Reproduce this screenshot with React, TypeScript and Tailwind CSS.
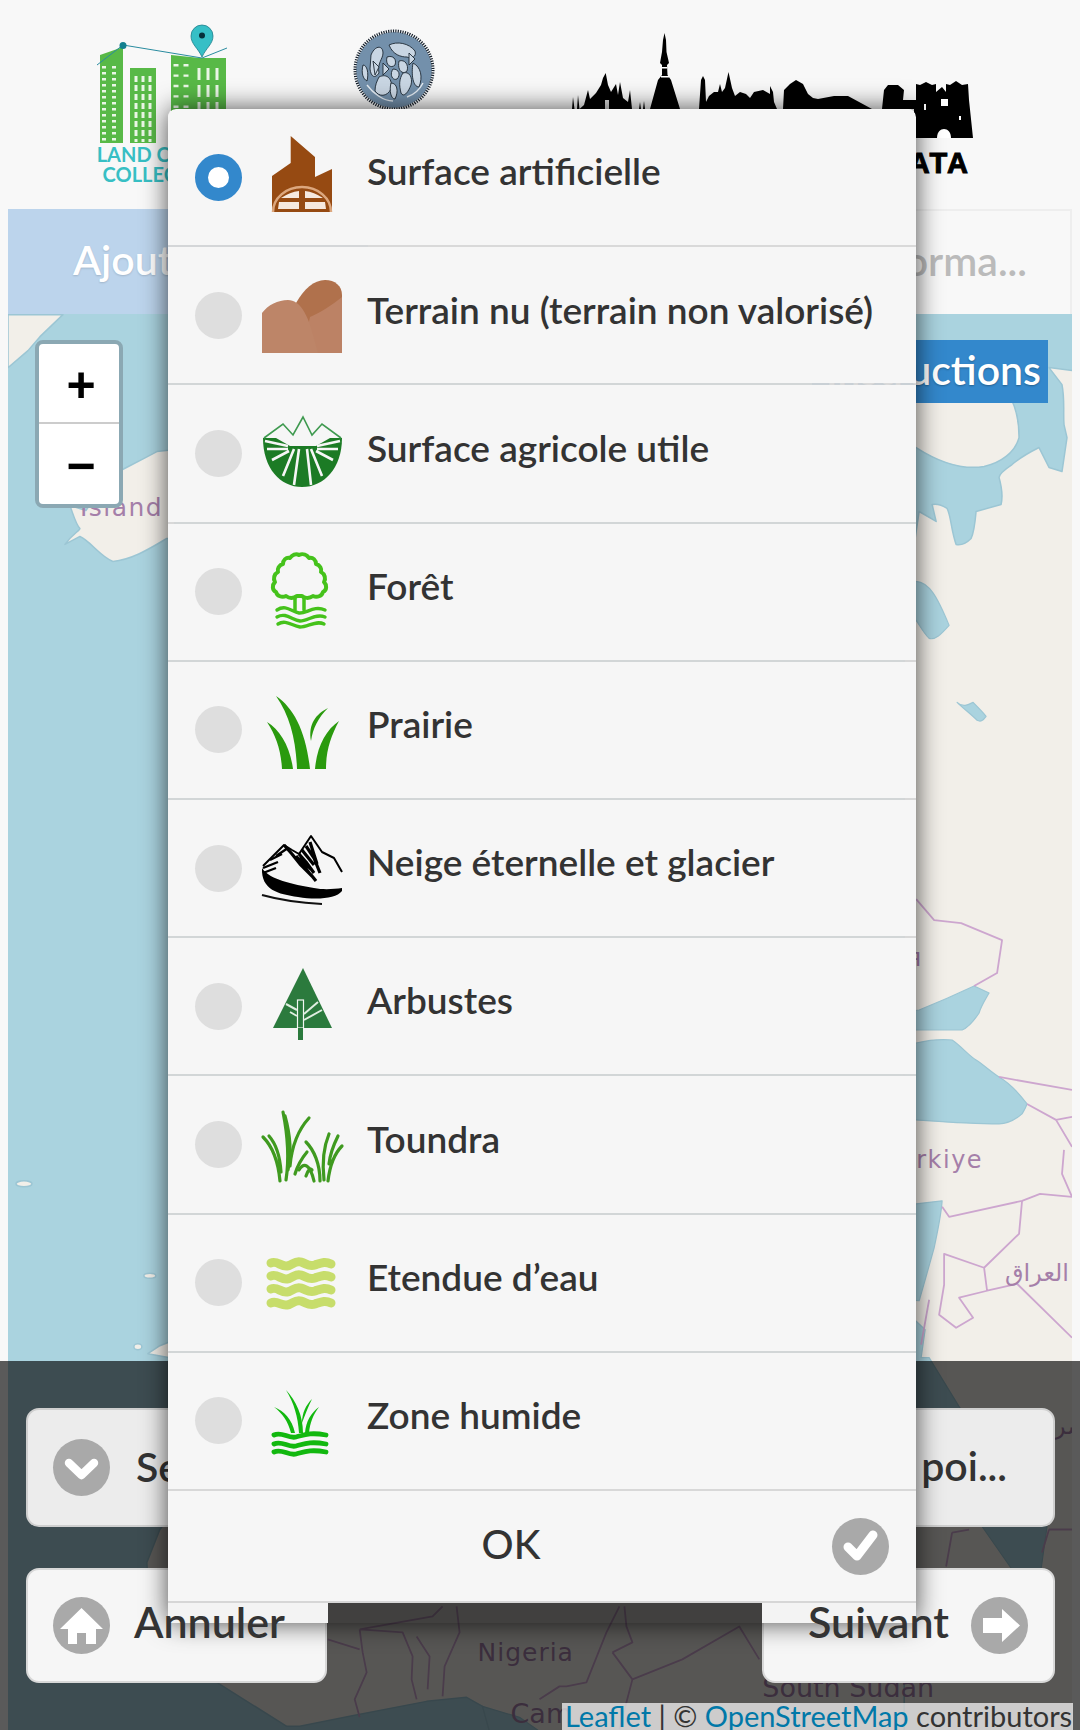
import React from "react";

const FONT = 'font-["Lato","Noto_Sans",sans-serif]';

const IconFrame = ({ children }: { children: React.ReactNode }) => (
  <svg viewBox="0 0 80 80" className="w-20 h-20 shrink-0 overflow-visible">{children}</svg>
);

const Factory = () => (
  <IconFrame>
    <path d="M28.7 -1 L53 20 L53 40 L70 32 L70 75 L10 75 L10 39 L28.7 26 Z" fill="#964a12" />
    <path d="M11 75 A29 25 0 0 1 69 75" fill="none" stroke="#dca77e" strokeWidth="2.5" />
    <path d="M19 61 Q28 55 37 54 L37 61 Z M43 54 Q52 55 61 61 L43 61 Z M16 72 L17 65 L37 65 L37 72 Z M43 65 L63 65 L64 72 L43 72 Z" fill="#f6e9df" />
  </IconFrame>
);

const Bare = () => (
  <IconFrame>
    <path d="M34 28 C42 14 52 5 63 5 C73 5 80 11 80 20 L80 78 L30 78 Z" fill="#b0714c" />
    <path d="M48 42 C58 38 70 30 80 22 L80 78 L40 78 Z" fill="#bc8265" />
    <path d="M0 38 C6 30 16 25 26 25 C38 25 46 40 51 60 L56 78 L0 78 Z" fill="#bd8568" />
  </IconFrame>
);

const Farm = () => (
  <IconFrame>
    <path d="M1 25 H80 C80 55 62 74 40 74 C18 74 1 55 1 25 Z" fill="#1c7b25" />
    <path d="M2 25 L21 11 L31 22 L41 4 L50 22 L60 11 L79 25" fill="none" stroke="#3f9a50" strokeWidth="1.6" />
    <path d="M14 25 L21 14 L31 25 L41 8 L50 25 L60 14 L68 25 L54 33 L28 33 Z" fill="#f6f6f6" />
    <g stroke="#f6f6f6" strokeWidth="2.6" fill="none">
      <path d="M26 33 L3 28 M26 36 L5 36 M27 38 L10 47 M32 36 L21 63 M37 36 L32 72 M45 36 L49 72 M49 36 L60 63 M54 38 L71 47 M55 36 L76 36 M55 33 L78 28" />
    </g>
  </IconFrame>
);

const Tree = () => (
  <IconFrame>
    <g fill="none" stroke="#45c21b" strokeLinecap="round" strokeLinejoin="round">
      <path
        d="M37 3 C41 1 45 3 47 6 C51 5 54 8 54 12 C58 13 60 17 59 20 C63 22 64 27 62 30 C65 33 65 38 61 40 C60 44 55 46 51 44 C47 47 42 46 40 44 L35 44 C32 46 28 47 24 44 C20 46 15 44 14 40 C10 38 10 33 13 30 C11 27 12 22 16 20 C15 17 17 13 21 12 C21 8 24 5 28 6 C30 3 34 1 37 3 Z"
        strokeWidth="4"
      />
      <path d="M33 46 L33 58 M42 46 L42 58" strokeWidth="3.5" />
      <path d="M15 58 C24 52 30 60 37 61 C44 62 52 53 63 58 M15 65 C24 60 30 68 38 69 C46 69 54 61 63 65 M16 72 C24 67 30 74 38 75 C46 75 54 68 62 72" strokeWidth="3.4" />
    </g>
  </IconFrame>
);

const Grass = () => (
  <IconFrame>
    <g fill="#2a9a0e">
      <path d="M14 6 C32 18 44 42 48 79 L35 79 C34 50 28 26 14 6 Z" />
      <path d="M5 32 C18 40 28 56 31 79 L20 79 C19 60 14 46 5 32 Z" />
      <path d="M77 31 C64 40 55 56 53 79 L64 79 C64 60 69 46 77 31 Z" />
      <path d="M66 18 C54 24 46 34 49 51 C51 38 56 28 66 18 Z" />
    </g>
  </IconFrame>
);

const Snow = () => (
  <IconFrame>
    <path d="M0 40 C8 52 30 56 52 60 C62 62 72 61 80 60 L80 63 C74 71 54 72 36 69 C16 66 -1 62 0 40 Z" fill="#000" />
    <path d="M0 67 C18 72 40 75 60 76" fill="none" stroke="#111" strokeWidth="2.2" />
    <g fill="none" stroke="#000" strokeLinejoin="round">
      <path d="M1 38 L12 27 L22 17 L30 22 L37 26 L49 8 L60 24 L72 30 L80 44" strokeWidth="2" />
      <path d="M22 17 L30 26 L38 36 L50 48 L54 53 M37 26 L44 34 L52 45 M44 18 L52 30 L58 45 M40 22 L52 37 M37 30 L50 42 M34 28 L48 46 M48 14 L55 36" strokeWidth="3.2" />
      <path d="M1 40 L16 34 M1 45 L14 40 M8 32 L20 26 M14 28 L26 20" strokeWidth="2.4" />
    </g>
  </IconFrame>
);

const Shrub = () => (
  <IconFrame>
    <path d="M41 2 L70 62 L11 62 Z" fill="#2b7a3d" />
    <rect x="35.5" y="34" width="6" height="28" fill="#2b7a3d" stroke="#f2f6f2" strokeWidth="1.2" />
    <rect x="36" y="62" width="5" height="12" fill="#2b7a3d" />
    <path d="M42 48 L56 36 M42 54 L60 44 M35 44 L24 38 M35 50 L28 46" stroke="#dfeee0" strokeWidth="2" fill="none" />
  </IconFrame>
);

const Tundra = () => (
  <IconFrame>
    <g fill="none" stroke="#3f9a1f" strokeWidth="3.2" strokeLinecap="round">
      <path d="M18 77 C16 55 10 42 1 33 M7 32 C14 40 18 52 19 68" />
      <path d="M24 76 C28 50 25 28 21 8 M23 12 C28 30 30 48 26 66" />
      <path d="M28 62 C30 40 36 26 47 14" />
      <path d="M33 70 C36 60 40 54 45 48" />
      <path d="M37 66 C42 58 48 60 52 77 M44 72 C46 66 48 64 50 66" />
      <path d="M58 77 C58 60 52 46 44 38 M62 76 C60 58 62 42 67 30" />
      <path d="M66 77 C68 60 74 48 80 42 M67 60 C68 50 72 40 76 32" />
    </g>
  </IconFrame>
);

const Water = () => (
  <IconFrame>
    <g fill="none" stroke="#c7dd6b" strokeWidth="9" strokeLinecap="round">
      <path d="M9 20 C15 17 19 24 25 23 C31 22 33 17 39 19 C45 21 47 24 53 22 C59 20 63 18 69 21" />
      <path d="M9 33 C15 30 19 37 25 36 C31 35 33 30 39 32 C45 34 47 37 53 35 C59 33 63 31 69 34" />
      <path d="M9 46 C15 43 19 50 25 49 C31 48 33 43 39 45 C45 47 47 50 53 48 C59 46 63 44 69 47" />
      <path d="M9 60 C15 57 19 63 25 62 C31 61 33 56 39 58 C45 60 47 63 53 61 C59 59 63 57 69 60" />
    </g>
  </IconFrame>
);

const Wetland = () => (
  <IconFrame>
    <g fill="#12b80f">
      <path d="M24 9 C34 20 41 34 41 52 L37 52 C36 36 32 22 24 9 Z" />
      <path d="M12 26 C20 32 26 40 29 52 L33 52 C30 38 22 30 12 26 Z" />
      <path d="M50 18 C44 24 40 32 40 42 C43 34 46 26 50 18 Z" />
      <path d="M57 26 C49 32 44 40 43 52 L47 52 C48 42 51 34 57 26 Z" />
    </g>
    <g fill="none" stroke="#12b80f" strokeWidth="4.8" strokeLinecap="round">
      <path d="M12 54 C20 50 26 58 34 56 C42 54 48 51 64 54" />
      <path d="M12 63 C20 59 26 67 34 65 C42 63 48 60 64 63" />
      <path d="M12 71 C20 67 26 75 34 73 C42 71 48 68 64 71" />
    </g>
  </IconFrame>
);

const rows: { label: string; icon: React.ReactNode; checked?: boolean }[] = [
  { label: "Surface artificielle", icon: <Factory />, checked: true },
  { label: "Terrain nu (terrain non valorisé)", icon: <Bare /> },
  { label: "Surface agricole utile", icon: <Farm /> },
  { label: "Forêt", icon: <Tree /> },
  { label: "Prairie", icon: <Grass /> },
  { label: "Neige éternelle et glacier", icon: <Snow /> },
  { label: "Arbustes", icon: <Shrub /> },
  { label: "Toundra", icon: <Tundra /> },
  { label: "Etendue d’eau", icon: <Water /> },
  { label: "Zone humide", icon: <Wetland /> },
];

const CircleIcon = ({ children }: { children: React.ReactNode }) => (
  <span className="w-[57px] h-[57px] shrink-0 rounded-full bg-[#a9a9a9] flex items-center justify-center">
    <svg viewBox="0 0 57 57" className="w-[57px] h-[57px]">{children}</svg>
  </span>
);

const Chevron = () => (
  <CircleIcon>
    <path d="M16 24 L28.5 36 L41 24" fill="none" stroke="#fff" strokeWidth="8.5" strokeLinecap="round" strokeLinejoin="round" />
  </CircleIcon>
);
const Home = () => (
  <CircleIcon>
    <path d="M28.5 11 L50 32 L43 32 L43 47 L33 47 L33 36 L24 36 L24 47 L15 47 L15 32 L7 32 Z" fill="#fff" />
  </CircleIcon>
);
const ArrowR = () => (
  <CircleIcon>
    <path d="M31 12 L49 28.5 L31 45 L31 36 L12 36 L12 21 L31 21 Z" fill="#fff" />
  </CircleIcon>
);
const Check = () => (
  <CircleIcon>
    <path d="M16 29 L25 38 L41 17" fill="none" stroke="#fff" strokeWidth="9" strokeLinejoin="round" strokeLinecap="round" />
  </CircleIcon>
);

const BuildingsLogo = () => (
  <svg viewBox="92 20 145 125" className="w-[145px] h-[125px] block">
    <path d="M100 55 L123 47 L123 143 L100 143 Z" fill="#58b947" />
    <rect x="130" y="68" width="26" height="75" fill="#58b947" />
    <path d="M171 55 L200 58 L226 58 L226 143 L171 143 Z" fill="#58b947" />
    <g stroke="#eaf6e6" strokeWidth="2.2" strokeDasharray="7 3.5">
      <path d="M104 66 V142 M114 66 V142" strokeWidth="4" strokeDasharray="2.4 3.6" />
      <path d="M136 76 V142 M143 76 V142 M150 76 V142" strokeWidth="3" strokeDasharray="6 3" />
      <path d="M176 64 V142 M186 64 V142" strokeWidth="5" strokeDasharray="2.4 8" />
      <path d="M199 68 V142 M208 68 V142 M217 68 V142" strokeWidth="3" strokeDasharray="12 5" />
    </g>
    <path d="M97 65 L123 45 L202 58 L227 48" fill="none" stroke="#2a8ca0" strokeWidth="1" />
    <circle cx="123" cy="45.5" r="3.5" fill="#12808f" />
    <path d="M202 57 C198 48 191 44 191 36 A11 11 0 0 1 213 36 C213 44 206 48 202 57 Z" fill="#36bfc6" stroke="#1f7f8c" strokeWidth="0.8" />
    <circle cx="202" cy="35.5" r="3" fill="#06303a" />
  </svg>
);

const SealLogo = () => (
  <svg viewBox="0 0 82 82" className="w-[82px] h-[82px] block">
    <circle cx="41" cy="41" r="38" fill="#7390ab" />
    <circle cx="41" cy="41" r="39" fill="none" stroke="#16202c" strokeWidth="3" strokeDasharray="1.2 1.2" />
    <g fill="#c9d6e3" stroke="#1c2833" strokeWidth="0.9">
      <path d="M18 26 C22 16 30 16 30 24 C30 30 24 34 26 44 C22 50 18 48 17 40 Z" />
      <path d="M36 16 C44 12 56 14 62 22 C64 28 58 30 54 28 C48 28 40 26 36 16 Z" />
      <path d="M34 28 C40 26 44 30 42 36 C38 40 32 36 34 28 Z" />
      <path d="M46 32 C52 30 56 36 54 42 C50 46 44 42 46 32 Z" />
      <path d="M40 40 C46 40 48 46 44 50 C40 52 36 46 40 40 Z" />
      <path d="M50 44 C56 42 60 48 58 56 C54 66 50 68 48 64 C46 56 46 50 50 44 Z" />
      <path d="M26 48 C34 44 40 50 38 60 C34 68 26 68 22 62 C22 56 24 52 26 48 Z" />
      <path d="M60 34 C68 38 70 48 66 58 C60 58 58 46 60 34 Z" />
      <path d="M10 36 C14 36 16 44 14 52 C10 50 8 44 10 36 Z" />
      <path d="M38 54 C44 54 46 62 42 70 C38 70 36 62 38 54 Z" />
      <path d="M20 32 L26 38 L22 46 Z M30 34 L36 40 L30 46 Z M56 24 L62 30 L56 36 Z" />
    </g>
    <path d="M14 56 C20 64 30 72 40 72 M54 68 C60 66 66 62 70 54" fill="none" stroke="#e4ebf2" strokeWidth="1.4" />
  </svg>
);

const Skyline = () => (
  <svg viewBox="570 30 410 110" className="w-[410px] h-[110px] block">
    <g fill="#000">
      <path d="M574 109 L575 97 L576.5 109 L579 109 L580 95 L581.5 109 L586 105 L590 90 L592 99 L598 93 L603 85 L605 78 L607.7 73 L610 85 L613 92 L618 84 L620 95 L622 82 L625 98 L630 102 L632 90 L634 109 Z" />
      <path d="M641 109 L642 102 L643 109 Z M645 109 L646 101 L647 109 Z" />
      <path d="M652 109 L660 80 L664 75 L664 65 L662 63 L664 52 L665 40 L666.5 33 L668 40 L668.5 52 L671 63 L669 65 L669.5 75 L673 80 L682 109 Z" />
      <path d="M701 109 L703 80 L705 76 L707 80 L708 102 L711 96 L716 92 L720 92 L722 84 L724 92 L727 88 L730.5 72 L734 88 L737 96 L742 92 L748 94 L752 98 L756 92 L765 90 L772 94 L772 86 L775 92 L776 102 L779 109 Z" />
      <path d="M785 109 L786 90 L792 84 L798 80 L805 84 L810 94 L815 98 L820 99 L836 96 L850 96 L874 109 Z" />
      <path d="M884 109 L886 90 L890 85 L900 85 L906 90 L905 100 L918 100 L918 84 L922 85 L928 82 L934 85 L938 84 L938 92 L944 87 L948 92 L948 84 L952 85 L958 81 L964 85 L970 84 L971 100 L975 138 L916 138 L916 109 Z" />
    </g>
    <rect x="607" y="100" width="4" height="9" fill="#ddd" />
    <rect x="664" y="67" width="5" height="1.5" fill="#fff" />
    <rect x="663" y="76" width="8" height="1.5" fill="#fff" />
    <path d="M939 138 C939 126 953 126 953 138 Z" fill="#fff" />
    <rect x="943" y="99" width="7" height="7" fill="#fff" />
    <rect x="926" y="104" width="2" height="6" fill="#fff" />
    <rect x="961" y="116" width="2" height="4" fill="#fff" />
  </svg>
);

const MapSvg = () => (
  <svg viewBox="8 314 1065 1416" className="absolute inset-0 w-full h-full">
    <g fill="#f2efe9" stroke="#9cc6d4" strokeWidth="1.5" strokeLinejoin="round">
      <path d="M8 367 L28 350 L40 336 L63 314 L8 314 Z" />
      <path d="M65 544 C72 534 80 530 80 528 C76 524 74 516 70 505 L86 510 L110 476 C120 470 127 467 157 451 L175 449 L175 538 L167 538 C150 548 133 559 113 561 C100 556 90 540 80 536 Z" />
      <ellipse cx="24" cy="1184" rx="8" ry="3" />
      <ellipse cx="150" cy="1276" rx="6" ry="2.5" />
      <ellipse cx="138" cy="1347" rx="4" ry="3" />
      <path d="M148 1354 L160 1346 L170 1342 L170 1358 Z" />
      <path d="M905 400 L1012 398 C1018 410 1020 424 1020 437 C1016 452 1002 462 985 466 C960 470 934 458 917 447 L905 440 Z" />
      <path d="M1074 370 L1050 367 L1063 384 C1066 400 1064 412 1065 424 L1068 437 L1063 471 L1050 467 L1040 447 C1030 452 1020 458 1013 464 C1004 470 1000 474 1000 477 C1003 488 1004 496 1002 504 L977 511 C976 522 975 532 972 538 C966 544 962 545 957 544 C952 530 952 516 948 508 C942 504 938 503 933 504 L937 521 L920 511 L916 538 L905 540 L905 1760 L1074 1760 Z" />
      <path d="M168 1361 L168 1520 L160 1530 L147 1563 L150 1620 L217 1683 L287 1727 L300 1727 L350 1717 L427 1702 L467 1698 L483 1707 L490 1732 L905 1732 L905 1361 Z" />
    </g>
    <g fill="#aad3df" stroke="#9cc6d4" strokeWidth="1.2" strokeLinejoin="round">
      <path d="M905 578 L917 581 C930 582 938 596 950 625 C942 634 936 640 930 638 C924 632 920 624 917 620 L905 612 Z" />
      <path d="M958 702 C964 708 970 704 974 702 C980 708 984 712 987 716 C984 720 982 722 978 720 C972 714 964 708 958 702 Z" />
      <path d="M905 1012 L920 1010 C940 1002 958 994 975 986 L990 993 C986 1000 982 1006 980 1013 C974 1022 968 1028 963 1030 L917 1030 L905 1030 Z" />
      <path d="M905 1044 L917 1043 C930 1040 942 1039 953 1040 C962 1046 970 1056 977 1060 C986 1066 992 1072 1000 1077 C1012 1084 1022 1096 1028 1104 C1026 1110 1024 1112 1023 1114 C1016 1120 1008 1124 1000 1124 C970 1124 945 1122 917 1120 L905 1120 Z" />
      <path d="M905 1204 L917 1204 L943 1201 C942 1216 938 1234 935 1248 C930 1266 925 1284 920 1301 L905 1300 Z" />
      <path d="M905 1310 L926 1330 L922 1358 L930 1358 L960 1407 L1048 1527 L1042 1570 L1040 1600 L1030 1600 L1013 1570 L983 1527 L917 1425 L905 1400 Z" />
      <path d="M490 1732 L483 1707 L520 1718 L540 1732 Z" />
    </g>
    <g fill="none" stroke="#cda6cf" strokeWidth="1.8" strokeLinejoin="round">
      <path d="M917 899 L935 920 L962 923 L1003 940 L998 973 L975 986" />
      <path d="M1000 1077 L1073 1090" />
      <path d="M1028 1104 L1057 1120 L1073 1117 M1057 1120 L1073 1147 M1065 1150 L1063 1174 L1073 1197" />
      <path d="M943 1207 L950 1217 L1023 1201 L1041 1194 L1073 1197" />
      <path d="M1023 1201 L1020 1234 L985 1268 L988 1291 L960 1298 L974 1318 L957 1328 L940 1315 L945 1285 L945 1254 L985 1268 M988 1291 L1018 1284 L1073 1338" />
      <path d="M930 1300 L922 1345" />
      <path d="M953 1533 L970 1530 M953 1533 L947 1567 M1050 1530 L1073 1530 M1050 1530 L1043 1553" />
      <path d="M360 1630 L363 1653 L367 1673 L355 1700 L360 1718 M360 1630 L403 1633 L413 1657 L412 1680 L417 1700 M417 1637 L430 1657 L428 1690 M443 1697 L445 1667 L460 1633 L457 1607 M328 1640 L360 1650 M443 1607 L433 1617 L360 1630" />
      <path d="M540 1700 L560 1687 L567 1687 L587 1683 L607 1633 L620 1607 M613 1653 L633 1643 L627 1627 L625 1607 M613 1653 L633 1680 L683 1660 L740 1627 L760 1660 M633 1680 L620 1730" />
    </g>
    <g fill="#a57fa9" fontFamily="DejaVu Sans, sans-serif">
      <text x="80" y="516" fontSize="25" letterSpacing="1.5">Ísland</text>
      <text x="984" y="1168" fontSize="24" letterSpacing="1.5" textAnchor="end">Türkiye</text>
      <text x="922" y="966" fontSize="24" textAnchor="end">Россия</text>
      <text x="1070" y="1281" fontSize="24" textAnchor="end">العراق</text>
      <text x="478" y="1662" fontSize="25" letterSpacing="1">Nigeria</text>
      <text x="511" y="1724" fontSize="27">Cam</text>
      <text x="763" y="1698" fontSize="27">South Sudan</text>
      <text x="1055" y="1434" fontSize="24">مصر</text>
    </g>
  </svg>
);

export default function App() {
  return (
    <div className={`relative w-[1080px] h-[1730px] overflow-hidden bg-[#f8f8f8] flex flex-col text-[#333] ${FONT}`}>
      <header className="h-[209px] shrink-0 flex items-start relative">
        <div className="ml-[92px] mt-[20px] w-[145px]">
          <BuildingsLogo />
          <div className="text-center text-[#37bfc4] text-[20px] leading-[20px] font-bold -mt-[1px] w-[136px] whitespace-nowrap">
            <div>LAND COVER</div>
            <div>COLLECTOR</div>
          </div>
        </div>
        <div className="ml-[116px] mt-[29px]">
          <SealLogo />
        </div>
        <div className="ml-[133px] mt-[30px] flex flex-col items-end">
          <Skyline />
          <div className="mr-[8px] mt-[8px] text-[#000] text-[29px] leading-[30px] font-bold tracking-[2px] font-['Liberation_Sans',sans-serif] [-webkit-text-stroke:1px_#000]">DATA</div>
        </div>
      </header>

      <nav className="mx-2 h-[105px] shrink-0 flex justify-between items-center text-[41px] font-semibold">
        <div className="w-[360px] h-full bg-[#bcd4ec] text-white pl-[65px] flex items-center pb-[4px] [text-shadow:0_1px_2px_rgba(0,0,0,0.15)]">Ajouter</div>
        <div className="w-[360px] h-full border-t-2 border-r-2 border-[#eeeeee] text-[#bbbbbb] flex items-center justify-end pr-[43px] pb-[4px]">Informa...</div>
      </nav>

      <main className="relative mx-2 flex-1 bg-[#aad3df]">
        <MapSvg />
        <div className="absolute left-[27px] top-[26px] w-[88px] rounded-[8px] border-4 border-[#8ba8b3] bg-white flex flex-col">
          <div className="h-[80px] border-b-2 border-[#cccccc] flex items-center justify-center pl-[4px] pt-[4px] font-['Liberation_Sans',sans-serif] font-bold text-[50px] leading-none text-black">+</div>
          <div className="h-[80px] flex items-center justify-center pl-[4px] pt-[4px] font-['Liberation_Sans',sans-serif] font-bold text-[50px] leading-none text-black">−</div>
        </div>
        <div className="absolute right-[24px] top-[26px] w-[236px] h-[63px] bg-[#3388cc] text-white text-[41px] font-semibold flex items-center justify-end pr-[7px] pb-[4px] [text-shadow:0_1px_2px_rgba(0,0,0,0.3)]">Instructions</div>
      </main>

      <footer className="absolute left-0 right-0 bottom-0 h-[369px] bg-[rgba(0,0,0,0.64)] pl-[26px] pr-[25px] pt-[47px] flex flex-col gap-[41px] text-[41px] font-semibold">
        <div className="h-[119px] rounded-[13px] border-2 border-[#cfcfcf] bg-[#ececec] flex items-center justify-between pl-[25px] pr-[46px]">
          <span className="flex items-center gap-[26px]"><Chevron /><span className="pb-[2px]">Se déplacer</span></span>
          <span className="pb-[4px]">au poi...</span>
        </div>
        <div className="h-[115px] flex justify-between text-[43px]">
          <div className="w-[301px] rounded-[13px] border-2 border-[#d8d8d8] bg-[#f6f6f6] flex items-center gap-[24px] pl-[25px]">
            <Home /><span className="relative z-20 pb-[6px]">Annuler</span>
          </div>
          <div className="w-[293px] rounded-[13px] border-2 border-[#d8d8d8] bg-[#f6f6f6] flex items-center justify-end gap-[22px] pr-[25px]">
            <span className="relative z-20 pb-[6px]">Suivant</span><ArrowR />
          </div>
        </div>
      </footer>

      <div className="absolute right-[7px] bottom-0 w-[511px] h-[27px] bg-[rgba(255,255,255,0.7)] pl-[3px] text-[29px] leading-[26px] text-[#333] whitespace-nowrap overflow-hidden">
        <span className="text-[#0078a8]">Leaflet</span> | © <span className="text-[#0078a8]">OpenStreetMap</span> contributors
      </div>

      <div className="absolute z-10 left-[168px] top-[109px] w-[748px] rounded-[8px] shadow-[0_0_26px_rgba(0,0,0,0.7)] text-[37px] font-semibold">
        {rows.map((r) => (
          <div
            key={r.label}
            className="h-[138.2px] flex items-center bg-[#f6f6f6] bg-clip-padding border-b-2 border-[rgba(214,214,214,0.92)] first:rounded-t-[8px]"
          >
            <span
              className={
                r.checked
                  ? "ml-[27px] w-[47px] h-[47px] shrink-0 rounded-full border-[13px] border-[#3388cc] bg-white"
                  : "ml-[27px] w-[47px] h-[47px] shrink-0 rounded-full bg-[#dedede]"
              }
            />
            <span className="ml-[20px]">{r.icon}</span>
            <span className="ml-[25px] pb-[12px] whitespace-nowrap">{r.label}</span>
          </div>
        ))}
        <div className="relative h-[112px] flex items-center justify-center bg-[#f6f6f6] border-b-2 border-[#d6d6d6]">
          <span className="-ml-[62px] pb-[4px] font-medium text-[40px]">OK</span>
          <span className="absolute right-[27px] top-[27px]"><Check /></span>
        </div>
        <div className="h-[20px] flex">
          <div className="w-[160px] bg-[#f3f3f3]" />
          <div className="flex-1 bg-[rgba(0,0,0,0.25)]" />
          <div className="w-[154px] bg-[#f3f3f3]" />
        </div>
      </div>
    </div>
  );
}
